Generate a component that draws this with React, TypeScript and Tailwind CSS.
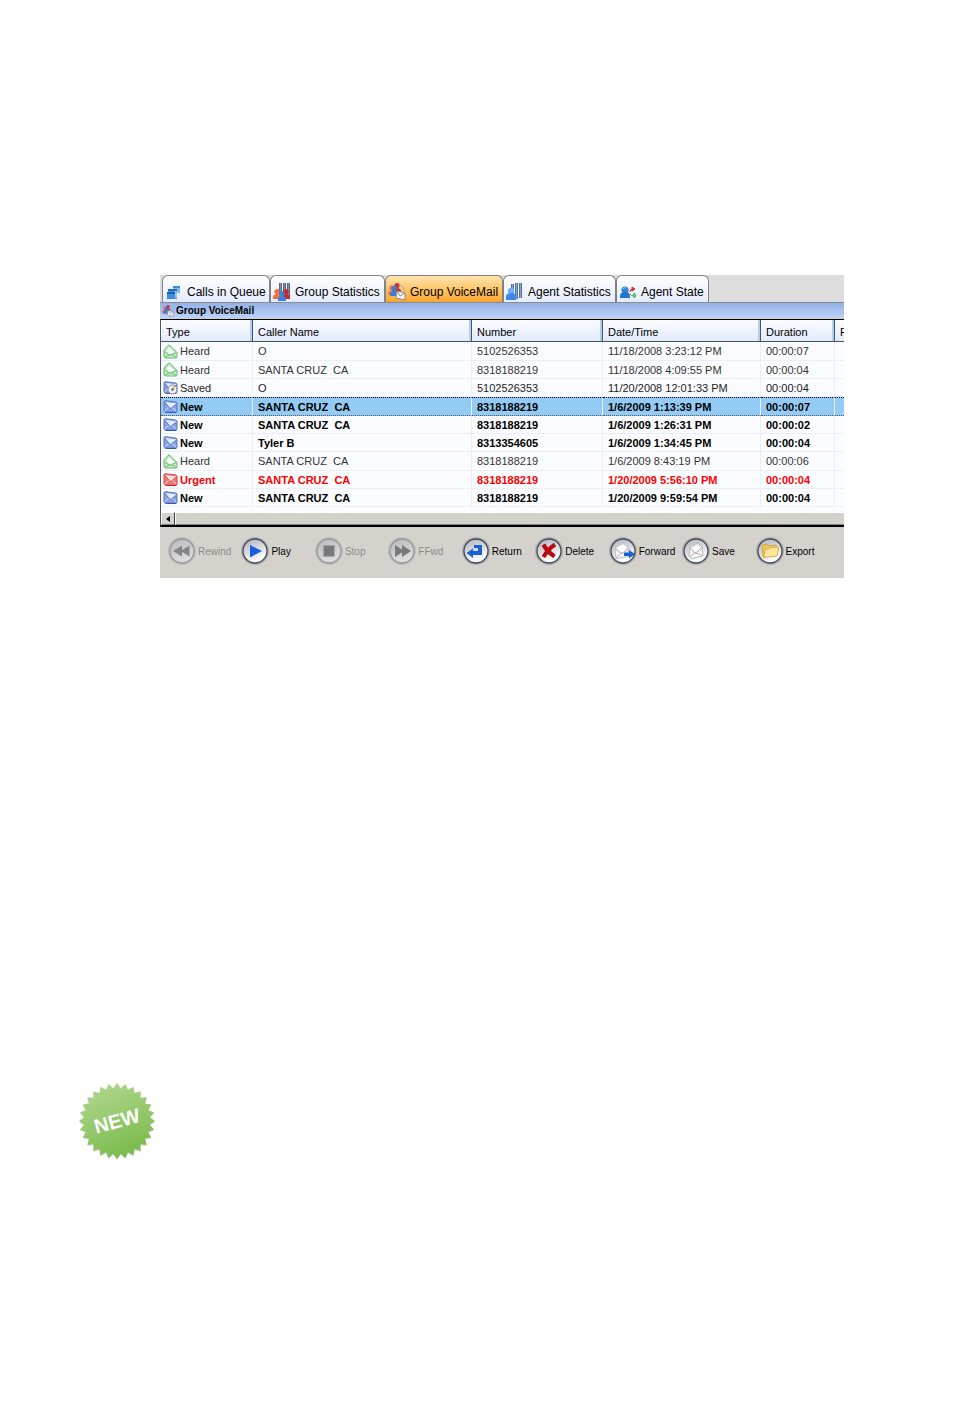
import React from 'react';

const tabs = [
  { label: 'Calls in Queue', icon: 'queue', width: 'w-[108px]' },
  { label: 'Group Statistics', icon: 'groupStats', width: 'w-[115px]' },
  { label: 'Group VoiceMail', icon: 'groupMail', width: 'w-[118px]' },
  { label: 'Agent Statistics', icon: 'agentStats', width: 'w-[113px]' },
  { label: 'Agent State', icon: 'agentState', width: 'w-[93px]' },
];

const columns = [
  { label: 'Type', width: 'w-[92px]' },
  { label: 'Caller Name', width: 'w-[219px]' },
  { label: 'Number', width: 'w-[131px]' },
  { label: 'Date/Time', width: 'w-[158px]' },
  { label: 'Duration', width: 'w-[74px]' },
  { label: 'F', width: '' },
];

const messages = [
  { type: 'Heard', name: 'O', number: '5102526353', date: '11/18/2008 3:23:12 PM', duration: '00:00:07' },
  { type: 'Heard', name: 'SANTA CRUZ  CA', number: '8318188219', date: '11/18/2008 4:09:55 PM', duration: '00:00:04' },
  { type: 'Saved', name: 'O', number: '5102526353', date: '11/20/2008 12:01:33 PM', duration: '00:00:04' },
  { type: 'New', name: 'SANTA CRUZ  CA', number: '8318188219', date: '1/6/2009 1:13:39 PM', duration: '00:00:07', selected: true },
  { type: 'New', name: 'SANTA CRUZ  CA', number: '8318188219', date: '1/6/2009 1:26:31 PM', duration: '00:00:02' },
  { type: 'New', name: 'Tyler B', number: '8313354605', date: '1/6/2009 1:34:45 PM', duration: '00:00:04' },
  { type: 'Heard', name: 'SANTA CRUZ  CA', number: '8318188219', date: '1/6/2009 8:43:19 PM', duration: '00:00:06' },
  { type: 'Urgent', name: 'SANTA CRUZ  CA', number: '8318188219', date: '1/20/2009 5:56:10 PM', duration: '00:00:04' },
  { type: 'New', name: 'SANTA CRUZ  CA', number: '8318188219', date: '1/20/2009 9:59:54 PM', duration: '00:00:04' },
];

const actions = [
  { label: 'Rewind', disabled: true },
  { label: 'Play' },
  { label: 'Stop', disabled: true },
  { label: 'FFwd', disabled: true },
  { label: 'Return' },
  { label: 'Delete' },
  { label: 'Forward' },
  { label: 'Save' },
  { label: 'Export' },
];

const rowStyles: Record<string, string> = {
  Heard: 'text-[#333333]',
  Saved: 'text-[#222222]',
  New: 'font-bold text-black',
  Urgent: 'font-bold text-[#ff0000]',
};

// Head and shoulders, used by all the group and agent icons
function Person({ x, y, color }: { x: number; y: number; color: string }) {
  return (
    <g transform={`translate(${x} ${y})`} fill={color}>
      <circle cx="4" cy="2.6" r="2.6" />
      <path d="M0 10V8.5Q0 5 4 5t4 3.5V10z" />
    </g>
  );
}

function GroupMail() {
  return (
    <>
      <Person x={0} y={2} color="#ee7a4e" />
      <Person x={5} y={0} color="#c0323c" />
      <Person x={2} y={3} color="#3d7dd8" />
      <path d="M12 2q4 1 4 6" fill="none" stroke="#8ab0e6" />
      <path d="M9 8l8 2v7l-9-2z" fill="#f7f7f2" stroke="#8d8d94" />
      <path d="M9 8l3 5 5-3" fill="none" stroke="#8d8d94" />
    </>
  );
}

function TabIcon({ name }: { name: string }) {
  return (
    <svg className="h-[18px] w-[18px] shrink-0" viewBox="0 0 18 18" aria-hidden="true">
      {name === 'queue' && (
        <>
          <path d="M8 3h7v7H8z" fill="#7fb9f0" />
          <path d="M8 3h7v2H8z" fill="#3f86d4" />
          <path d="M3 6h9v10H3z" fill="#4c9ae6" />
          <path d="M3 6h9v2H3z" fill="#2568b8" />
          <path d="M2 9h8v2H2z" fill="#1b5cad" />
          <path d="M2 11h8v5H2z" fill="#3f8ddd" />
          <path d="M10 8h2v7h-2z" fill="#8fc4f5" />
        </>
      )}
      {name === 'groupStats' && (
        <>
          <path d="M6 0h3v12H6zM10 0h3v13h-3zM14 0h3v15h-3z" fill="#5a6480" />
          <path d="M7 0h1v12H7zM11 0h1v13h-1zM15 0h1v15h-1z" fill="#8590ad" />
          <Person x={0} y={6} color="#ee7044" />
          <Person x={9} y={6} color="#c92830" />
          <Person x={5} y={8} color="#3385e0" />
        </>
      )}
      {name === 'groupMail' && <GroupMail />}
      {name === 'agentStats' && (
        <>
          <path d="M5 1h3v12H5zM9 0h3v16H9zM13 0h3v15h-3z" fill="#56739f" />
          <path d="M6 1h1v12H6zM10 0h1v16h-1zM14 0h1v15h-1z" fill="#86a5ce" />
          <circle cx="5" cy="8" r="3.2" fill="#6aaef5" />
          <path d="M0 17v-3q0-4 5-4t5 4v3z" fill="#3d88e6" />
        </>
      )}
      {name === 'agentState' && (
        <>
          <circle cx="6" cy="7" r="3.6" fill="#2f86d8" />
          <path d="M1 15v-2q0-4 5-4t5 4v2z" fill="#2475cd" />
          <path d="M4 6q1-2 3-1" fill="none" stroke="#8ccaf8" />
          <path d="M11 9q0-3 3-3M13 4l3 2-3 2z" fill="#d83030" stroke="#d83030" />
          <path d="M11 11q1 2 4 2M15 10v5l2-2z" fill="none" stroke="#2ba53a" />
        </>
      )}
    </svg>
  );
}

function MessageIcon({ type }: { type: string }) {
  if (type === 'Heard') {
    return (
      <svg className="h-[15px] w-[15px] shrink-0" viewBox="0 0 15 15" aria-hidden="true">
        <path d="M1 6l4-4.500q1-.8 2 0L14 8.500v4q0 1.500-1 1.500H3q-2-.5-2-1.500z" fill="#c9ebc9" stroke="#63b46c" />
        <path d="M2.500 7l3.500-4.500 6.500 6L7 11z" fill="#f5fcf5" stroke="#8fcf95" strokeWidth=".6" />
        <path d="M1.500 8l4.500 3q1 .5 2 0l5.500-2.500M2 13l4-2M13 13l-4-2" fill="none" stroke="#5bb565" strokeWidth=".8" />
      </svg>
    );
  }
  const red = type === 'Urgent';
  return (
    <svg className="h-[15px] w-[15px] shrink-0" viewBox="0 0 15 15" aria-hidden="true">
      <path d="M1 3q0-1.500 1.500-1.300L12.500 3Q14 3.200 14 4.500v7.500q0 1.500-1.500 1.500H3.500Q1 13 1 11.500z" fill={red ? '#f07878' : '#86a2e6'} stroke={red ? '#d64545' : '#5a77c6'} />
      <path d="M2 3l10.500 1.300.8.700-5 4q-1 .6-1.800 0z" fill={red ? '#fde2e2' : '#e4edff'} />
      <path d="M1.800 11.800L5.600 8.300M13.200 11.800L9.200 8.300" fill="none" stroke={red ? '#ffd5d5' : '#d5e1fc'} />
      <path d="M2 3.500l4.500 5.300q1 .8 2 0L13.500 5" fill="none" stroke={red ? '#cf3030' : '#4865b8'} strokeWidth=".8" />
      <path d="M2.500 13.300h10.500" stroke={red ? '#c02020' : '#3251a8'} />
      {type === 'Saved' && (
        <>
          <circle cx="9.5" cy="9.5" r="4.500" fill="#eceef1" stroke="#858c9b" />
          <circle cx="9.5" cy="9.5" r="1.200" fill="#444a58" />
          <path d="M10 9l2-3" stroke="#d7b340" strokeWidth="1.500" />
        </>
      )}
    </svg>
  );
}

function ActionIcon({ name, disabled }: { name: string; disabled?: boolean }) {
  return (
    <svg className="h-7 w-7 shrink-0" viewBox="0 0 28 28" aria-hidden="true">
      <circle cx="14" cy="14" r="13" fill="none" stroke={disabled ? '#c0bebb' : '#b0afae'} strokeWidth="2" />
      <circle cx="14" cy="14" r="12" fill={disabled ? 'url(#discOff)' : 'url(#disc)'} stroke={disabled ? '#98989a' : '#444b59'} strokeWidth="1.3" />
      {name === 'Rewind' && <path d="M14 8.500v11L5 14zM21.500 8.500v11l-9-5.500z" fill="#858587" />}
      {name === 'Play' && <path d="M9 8v12.500L21 14z" fill="#175fdc" />}
      {name === 'Stop' && <path d="M8.500 8.500h11v11h-11z" fill="#79797b" />}
      {name === 'FFwd' && <path d="M7 8v12l9-6zM14 8v12l9-6z" fill="#79797b" />}
      {name === 'Return' && <path d="M12 8h8v10h-9v3l-6.500-5 6.500-4.500V14h5v-3h-4z" fill="#1a62d2" />}
      {name === 'Delete' && <path d="M8.500 7.500q3 6.500 11 12M20 7.500Q13 12 8.500 20" fill="none" stroke="#b60d12" strokeWidth="4.200" />}
      {name === 'Forward' && (
        <>
          <path d="M6 11l8-5 5 3.500v10L7 21.500z" fill="#f6f6f8" stroke="#c0c0c8" />
          <path d="M8 10l6-3 4 3v4l-5 2-5-3z" fill="#ffffff" stroke="#d0d0d6" strokeWidth=".7" />
          <path d="M6 12l7 4.500 6-5M7 21l5-5" fill="none" stroke="#b4b4bc" />
          <path d="M15 15.500h5V13l6 4-6 4.500V19h-5z" fill="#1763d0" />
        </>
      )}
      {name === 'Save' && (
        <>
          <path d="M8 10l8-4 4 4 1 9-11 2.500L7 19z" fill="#f6f6f8" stroke="#b9b6ba" />
          <path d="M10 10l6-2.500 3 3-.5 3-4.500 2.500-4-3z" fill="#ffffff" stroke="#d0ced2" strokeWidth=".7" />
          <path d="M8 11l5 5.500 7-6M8 19.500l5-4 7 3" fill="none" stroke="#c2aeb2" />
        </>
      )}
      {name === 'Export' && (
        <>
          <path d="M6 8.500L11 7l2 2 7-1 .5 3L9 20H7z" fill="#edc65c" stroke="#cfa746" />
          <path d="M9 12.500l4-.5 1.500-1.500L23 10l-2 9-13 1.500z" fill="#ffe596" stroke="#dcb452" />
        </>
      )}
    </svg>
  );
}

function NewBadge() {
  const teeth = 28;
  const points = Array.from({ length: teeth * 2 }, (_, i) => {
    const r = i % 2 === 0 ? 38 : 33;
    const a = (i * Math.PI) / teeth;
    return `${39 + r * Math.sin(a)},${39 - r * Math.cos(a)}`;
  }).join(' ');
  return (
    <svg className="block h-[78px] w-[78px]" viewBox="0 0 78 78" role="img" aria-label="New">
      <defs>
        <linearGradient id="badge" x1="0.3" y1="0" x2="0.7" y2="1">
          <stop offset="0" stopColor="#b0d68c" />
          <stop offset="0.5" stopColor="#94c86b" />
          <stop offset="1" stopColor="#78b946" />
        </linearGradient>
      </defs>
      <polygon points={points} fill="#d3d6d0" transform="translate(0 1)" />
      <polygon points={points} fill="url(#badge)" />
      <text x="39" y="46" textAnchor="middle" transform="rotate(-15 39 39)" fill="#ffffff" fontFamily="Liberation Sans, sans-serif" fontSize="20" fontWeight="bold">
        NEW
      </text>
    </svg>
  );
}

export default function App() {
  return (
    <main className="min-h-screen bg-white pt-[275px] font-['Liberation_Sans',Arial,sans-serif] text-[11px] text-black">
      {/* Shared gradients for the round toolbar buttons */}
      <svg className="absolute h-0 w-0" aria-hidden="true">
        <defs>
          <linearGradient id="disc" x1="0" y1="0" x2="0.4" y2="1">
            <stop offset="0" stopColor="#aeb0b8" />
            <stop offset="0.5" stopColor="#d6d7df" />
            <stop offset="1" stopColor="#ffffff" />
          </linearGradient>
          <linearGradient id="discOff" x1="0" y1="0" x2="0.4" y2="1">
            <stop offset="0" stopColor="#b8b8b8" />
            <stop offset="1" stopColor="#dededf" />
          </linearGradient>
        </defs>
      </svg>

      <section className="mr-[110px] ml-40 overflow-hidden bg-[#d5d2cd]">
        {/* Tabs */}
        <div className="flex h-7 border-b border-[#8b8b93] bg-[#dddddd] pl-[2px]" role="tablist">
          {tabs.map((tab) => {
            const active = tab.label === 'Group VoiceMail';
            return (
              <button
                key={tab.label}
                type="button"
                role="tab"
                aria-selected={active}
                className={`flex shrink-0 items-center gap-1 rounded-t-md border border-b-0 border-[#808088] pt-[6px] pl-[2px] text-xs whitespace-nowrap ${tab.width} ${
                  active ? 'bg-linear-to-b from-[#ffe4ae] via-[#ffc668] to-[#f9a52b]' : 'bg-linear-to-b from-white to-[#e4ebfc]'
                }`}
              >
                <TabIcon name={tab.icon} />
                {tab.label}
              </button>
            );
          })}
        </div>

        {/* Panel title */}
        <h1 className="flex h-4 items-center gap-[2px] border-b border-[#c8ccd4] bg-linear-to-b from-[#93b1e6] to-[#bdd2f6] pl-[2px] text-[10px] font-bold">
          <svg className="h-3 w-3" viewBox="0 0 18 18" aria-hidden="true">
            <GroupMail />
          </svg>
          Group VoiceMail
        </h1>

        {/* Message list */}
        <div className="border-t border-l border-t-black border-l-[#55555c] bg-[#fbfcff] pb-[5px]">
          <table className="w-full table-fixed border-separate border-spacing-0 text-left">
            <thead>
              <tr className="h-[22px]">
                {columns.map((col) => (
                  <th
                    key={col.label}
                    scope="col"
                    className={`overflow-hidden border-r border-b border-[#3f5765] bg-linear-to-b from-[#fafcff] to-[#e3ebfc] p-0 pt-[3px] pl-[5px] font-normal whitespace-nowrap shadow-[inset_-2px_0_0_#b5cbf0] last:border-r-0 last:shadow-none ${col.width}`}
                  >
                    {col.label}
                  </th>
                ))}
              </tr>
            </thead>
            <tbody>
              {messages.map((msg, i) => {
                const cell = `overflow-hidden border-r border-b p-0 pl-[5px] whitespace-pre last:border-r-0 ${
                  msg.selected
                    ? '[border-style:dotted_solid_dotted_none] border-t border-t-black border-r-[#e9eefb] border-b-[#44596d] bg-[#93cbf5]'
                    : 'border-[#e9eefb]'
                }`;
                return (
                  <tr key={i} className={`${i % 3 === 0 ? 'h-[19px]' : 'h-[18px]'} leading-4 ${rowStyles[msg.type]}`}>
                    <td className={cell}>
                      <span className="-ml-[3px] flex items-center gap-[2px]">
                        <MessageIcon type={msg.type} />
                        {msg.type}
                      </span>
                    </td>
                    <td className={cell}>{msg.name}</td>
                    <td className={cell}>{msg.number}</td>
                    <td className={cell}>{msg.date}</td>
                    <td className={cell}>{msg.duration}</td>
                    <td className={cell}></td>
                  </tr>
                );
              })}
            </tbody>
          </table>
        </div>

        {/* Horizontal scrollbar */}
        <div className="flex h-[15px] border-b-2 border-l border-b-black border-l-[#55555c] bg-[#d5d2cd]">
          <button type="button" aria-label="Scroll left" className="flex w-[14px] items-center justify-center border border-t-white border-r-[#404040] border-b-[#808080] border-l-white">
            <svg className="h-[6px] w-1" viewBox="0 0 4 6" aria-hidden="true">
              <path d="M4 0v6L0 3z" />
            </svg>
          </button>
          <div className="flex-1 border-t border-b border-l border-t-white border-b-[#808080] border-l-white" />
        </div>

        {/* Playback and message actions */}
        <div className="grid h-[51px] grid-cols-9 items-start pt-[10px] pr-[15px] pl-2 text-[10px]">
          {actions.map((action) => (
            <button
              key={action.label}
              type="button"
              disabled={action.disabled}
              className="flex items-center gap-[2px] whitespace-nowrap text-black disabled:text-[#8d8b88]"
            >
              <ActionIcon name={action.label} disabled={action.disabled} />
              {action.label}
            </button>
          ))}
        </div>
      </section>

      <div className="pt-[504px] pb-10 pl-[78px]">
        <NewBadge />
      </div>
    </main>
  );
}
